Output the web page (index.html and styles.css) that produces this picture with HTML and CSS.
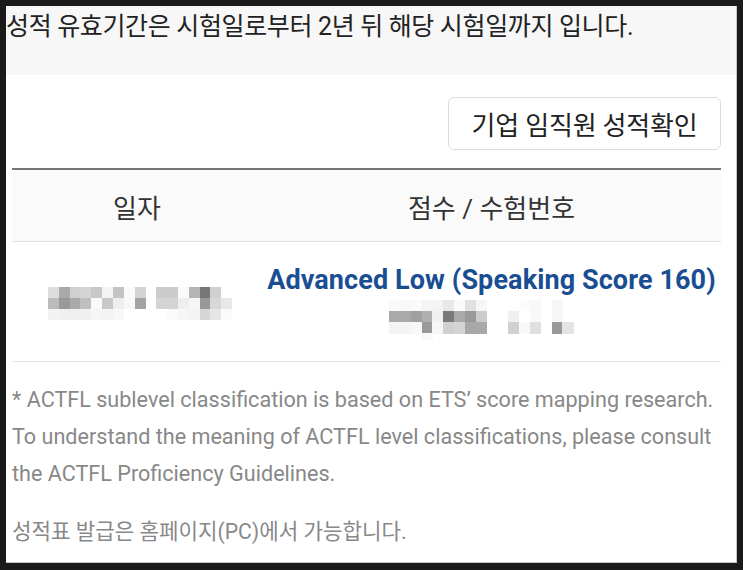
FILE: index.html
```html
<!DOCTYPE html>
<html lang="ko">
<head>
<meta charset="utf-8">
<title>성적 확인</title>
<link rel="stylesheet" href="styles.css">
</head>
<body>
<div class="panel">
  <div class="notice">성적 유효기간은 시험일로부터 2년 뒤 해당 시험일까지 입니다.</div>
  <div class="content">
    <div class="actions">
      <button class="btn" type="button">기업 임직원 성적확인</button>
    </div>
    <div class="table">
      <div class="row head">
        <div class="cell">일자</div>
        <div class="cell">점수 / 수험번호</div>
      </div>
      <div class="row body-row">
        <div class="cell">
          <svg class="mosaic mosaic-date" width="184" height="33" viewBox="0 0 17 3" preserveAspectRatio="none" aria-label="redacted">
            <rect x="0" y="0" width="1.02" height="1.02" fill="#ddd"/>
            <rect x="1" y="0" width="1.02" height="1.02" fill="#aaa"/>
            <rect x="2" y="0" width="1.02" height="1.02" fill="#d0d0d0"/>
            <rect x="3" y="0" width="1.02" height="1.02" fill="#d4d4d4"/>
            <rect x="4" y="0" width="1.02" height="1.02" fill="#c8c8c8"/>
            <rect x="5" y="0" width="1.02" height="1.02" fill="#f4f4f4"/>
            <rect x="6" y="0" width="1.02" height="1.02" fill="#c4c4c4"/>
            <rect x="7" y="0" width="1.02" height="1.02" fill="#fafafa"/>
            <rect x="8" y="0" width="1.02" height="1.02" fill="#d4d4d4"/>
            <rect x="10" y="0" width="1.02" height="1.02" fill="#ccc"/>
            <rect x="11" y="0" width="1.02" height="1.02" fill="#ccc"/>
            <rect x="12" y="0" width="1.02" height="1.02" fill="#fafafa"/>
            <rect x="13" y="0" width="1.02" height="1.02" fill="#b4b4b4"/>
            <rect x="14" y="0" width="1.02" height="1.02" fill="#777"/>
            <rect x="15" y="0" width="1.02" height="1.02" fill="#d0d0d0"/>
            <rect x="0" y="1" width="1.02" height="1.02" fill="#bbb"/>
            <rect x="1" y="1" width="1.02" height="1.02" fill="#999"/>
            <rect x="2" y="1" width="1.02" height="1.02" fill="#aaa"/>
            <rect x="3" y="1" width="1.02" height="1.02" fill="#c0c0c0"/>
            <rect x="4" y="1" width="1.02" height="1.02" fill="#fafafa"/>
            <rect x="5" y="1" width="1.02" height="1.02" fill="#c8c8c8"/>
            <rect x="6" y="1" width="1.02" height="1.02" fill="#eee"/>
            <rect x="7" y="1" width="1.02" height="1.02" fill="#f8f8f8"/>
            <rect x="8" y="1" width="1.02" height="1.02" fill="#a4a4a4"/>
            <rect x="10" y="1" width="1.02" height="1.02" fill="#d4d4d4"/>
            <rect x="11" y="1" width="1.02" height="1.02" fill="#d4d4d4"/>
            <rect x="12" y="1" width="1.02" height="1.02" fill="#eee"/>
            <rect x="13" y="1" width="1.02" height="1.02" fill="#f6f6f6"/>
            <rect x="14" y="1" width="1.02" height="1.02" fill="#999"/>
            <rect x="15" y="1" width="1.02" height="1.02" fill="#d8d8d8"/>
            <rect x="16" y="1" width="1.02" height="1.02" fill="#e8e8e8"/>
            <rect x="0" y="2" width="1.02" height="1" fill="#f2f2f2"/>
            <rect x="1" y="2" width="1.02" height="1" fill="#f0f0f0"/>
            <rect x="2" y="2" width="1.02" height="1" fill="#f0f0f0"/>
            <rect x="3" y="2" width="1.02" height="1" fill="#f0f0f0"/>
            <rect x="4" y="2" width="1.02" height="1" fill="#f6f6f6"/>
            <rect x="5" y="2" width="1.02" height="1" fill="#f4f4f4"/>
            <rect x="6" y="2" width="1.02" height="1" fill="#f8f8f8"/>
            <rect x="11" y="2" width="1.02" height="1" fill="#fbfbfb"/>
            <rect x="12" y="2" width="1.02" height="1" fill="#f6f6f6"/>
            <rect x="13" y="2" width="1.02" height="1" fill="#f4f4f4"/>
            <rect x="14" y="2" width="1.02" height="1" fill="#d6d6d6"/>
            <rect x="15" y="2" width="1.02" height="1" fill="#e6e6e6"/>
            <rect x="16" y="2" width="1.02" height="1" fill="#fafafa"/>
          </svg>
        </div>
        <div class="cell score-cell">
          <div class="score">Advanced Low (Speaking Score 160)</div>
          <svg class="mosaic mosaic-id" width="206" height="40" viewBox="0 0 19 3.6" preserveAspectRatio="none" aria-label="redacted">
            <rect x="0" y="0" width="1.02" height="1.02" fill="#fafafa"/>
            <rect x="1" y="0" width="1.02" height="1.02" fill="#f8f8f8"/>
            <rect x="2" y="0" width="1.02" height="1.02" fill="#fafafa"/>
            <rect x="3" y="0" width="1.02" height="1.02" fill="#f4f4f4"/>
            <rect x="4" y="0" width="1.02" height="1.02" fill="#f4f4f4"/>
            <rect x="5" y="0" width="1.02" height="1.02" fill="#e8e8e8"/>
            <rect x="6" y="0" width="1.02" height="1.02" fill="#fafafa"/>
            <rect x="7" y="0" width="1.02" height="1.02" fill="#e0e0e0"/>
            <rect x="8" y="0" width="1.02" height="1.02" fill="#f6f6f6"/>
            <rect x="12" y="0" width="1.02" height="1.02" fill="#fbfbfb"/>
            <rect x="13" y="0" width="1.02" height="1.02" fill="#f8f8f8"/>
            <rect x="15" y="0" width="1.02" height="1.02" fill="#f6f6f6"/>
            <rect x="0" y="1" width="1.02" height="1.02" fill="#aaa"/>
            <rect x="1" y="1" width="1.02" height="1.02" fill="#aaa"/>
            <rect x="2" y="1" width="1.02" height="1.02" fill="#a0a0a0"/>
            <rect x="3" y="1" width="1.02" height="1.02" fill="#b0b0b0"/>
            <rect x="4" y="1" width="1.02" height="1.02" fill="#f0f0f0"/>
            <rect x="5" y="1" width="1.02" height="1.02" fill="#7a7a7a"/>
            <rect x="6" y="1" width="1.02" height="1.02" fill="#aaa"/>
            <rect x="7" y="1" width="1.02" height="1.02" fill="#999"/>
            <rect x="8" y="1" width="1.02" height="1.02" fill="#ccc"/>
            <rect x="11" y="1" width="1.02" height="1.02" fill="#f0f0f0"/>
            <rect x="13" y="1" width="1.02" height="1.02" fill="#f8f8f8"/>
            <rect x="15" y="1" width="1.02" height="1.02" fill="#f6f6f6"/>
            <rect x="0" y="2" width="1.02" height="1.02" fill="#f4f4f4"/>
            <rect x="1" y="2" width="1.02" height="1.02" fill="#f4f4f4"/>
            <rect x="2" y="2" width="1.02" height="1.02" fill="#f8f8f8"/>
            <rect x="3" y="2" width="1.02" height="1.02" fill="#999"/>
            <rect x="4" y="2" width="1.02" height="1.02" fill="#f6f6f6"/>
            <rect x="5" y="2" width="1.02" height="1.02" fill="#d0d0d0"/>
            <rect x="6" y="2" width="1.02" height="1.02" fill="#d4d4d4"/>
            <rect x="7" y="2" width="1.02" height="1.02" fill="#a8a8a8"/>
            <rect x="8" y="2" width="1.02" height="1.02" fill="#a8a8a8"/>
            <rect x="11" y="2" width="1.02" height="1.02" fill="#d0d0d0"/>
            <rect x="12" y="2" width="1.02" height="1.02" fill="#f8f8f8"/>
            <rect x="13" y="2" width="1.02" height="1.02" fill="#e0e0e0"/>
            <rect x="15" y="2" width="1.02" height="1.02" fill="#999"/>
            <rect x="16" y="2" width="1.02" height="1.02" fill="#e4e4e4"/>
            <rect x="3" y="3" width="1.02" height="0.6" fill="#f8f8f8"/>
          </svg>
        </div>
      </div>
    </div>
    <p class="note">* ACTFL sublevel classification is based on ETS’ score mapping research. To understand the meaning of ACTFL level classifications, please consult the ACTFL Proficiency Guidelines.</p>
    <p class="note note-ko">성적표 발급은 홈페이지(PC)에서 가능합니다.</p>
  </div>
</div>
</body>
</html>
```

FILE: styles.css
```css
html, body {
  margin: 0;
  padding: 0;
  background: #1a1a1a;
  height: 100%;
}

body {
  font-family: Roboto, "Noto Sans CJK KR", sans-serif;
  overflow: hidden;
}

.panel {
  margin: 6px 0 0 6px;
  width: 730px;
  height: 556px;
  background: #fff;
  border-right: 1px solid #c6c6c6;
  border-bottom: 1px solid #c6c6c6;
  overflow: hidden;
}

.notice {
  height: 69px;
  box-sizing: border-box;
  padding-top: 4px;
  background: #f7f7f7;
  color: #222;
  font-size: 25px;
  line-height: 34px;
  letter-spacing: -0.35px;
  white-space: nowrap;
}

.content {
  padding: 0 15px 0 6px;
}

.actions {
  display: flex;
  justify-content: flex-end;
  padding-top: 22px;
}

.btn {
  width: 273px;
  height: 53px;
  background: #fff;
  border: 1px solid #dcdcdc;
  border-radius: 6px;
  font-family: Roboto, "Noto Sans CJK KR", sans-serif;
  font-size: 26px;
  color: #222;
  letter-spacing: -0.2px;
  padding: 0;
}

.table {
  margin-top: 18px;
  border-top: 2px solid #777;
}

.row {
  display: grid;
  grid-template-columns: 250px 1fr;
}

.head {
  height: 71px;
  background: #fafafa;
  border-bottom: 1px solid #e4e4e4;
  font-size: 26px;
  color: #333;
}

.cell {
  display: flex;
  flex-direction: column;
  align-items: center;
  justify-content: center;
}

.head .cell {
  padding-top: 2px;
}

.body-row {
  height: 119px;
  border-bottom: 1px solid #e6e6e6;
}

.mosaic {
  display: block;
  shape-rendering: crispEdges;
}

.mosaic-date {
  margin-left: 6px;
  margin-top: 3px;
}

.score {
  color: #1a4e93;
  font-weight: 700;
  font-size: 27px;
  line-height: 32px;
  letter-spacing: 0.1px;
  white-space: nowrap;
}

.mosaic-id {
  margin-top: 4px;
}

.note {
  margin: 19px 0 0;
  color: #888;
  font-size: 21.6px;
  line-height: 37px;
}

.note-ko {
  margin-top: 21px;
  font-size: 21.2px;
}
```
